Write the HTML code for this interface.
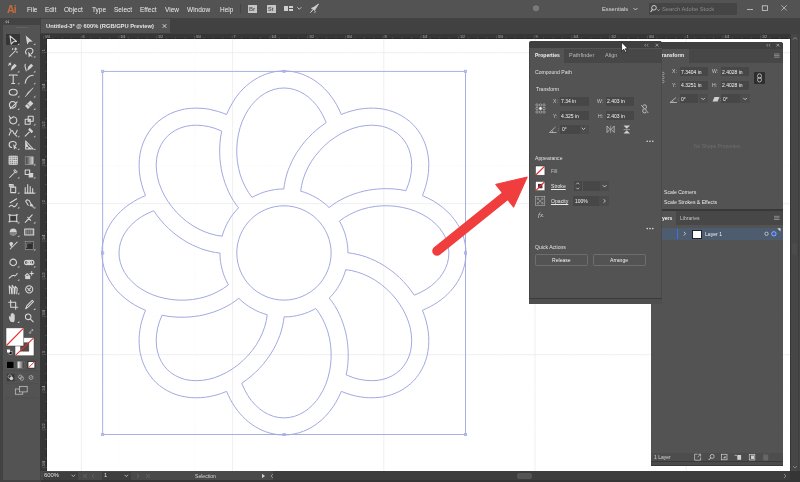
<!DOCTYPE html>
<html><head><meta charset="utf-8">
<style>
*{margin:0;padding:0;box-sizing:border-box}
html,body{width:800px;height:482px;overflow:hidden;background:#424242;font-family:"Liberation Sans",sans-serif;color:#d0d0d0}
.a{position:absolute}
.t,.ft{will-change:transform}
.t{position:absolute;white-space:nowrap;line-height:1}
.m{font-size:6.5px;top:6.8px;color:#ececec}
.p{font-size:5.1px;color:#e2e2e2}
.f{position:absolute;background:#474747}
.ft{position:absolute;white-space:nowrap;line-height:1;font-size:5px;color:#f4f4f4}
svg.i{position:absolute;overflow:visible}
.s{fill:none;stroke:#cfcfcf;stroke-width:0.9}
</style></head><body>
<!-- ============ MENU BAR ============ -->
<div class="a" style="left:0;top:0;width:800px;height:17.5px;background:#535353"></div>
<div class="t" style="left:6.8px;top:3.6px;font-size:10.5px;color:#c26c3c;font-weight:bold;letter-spacing:-0.9px">Ai</div>
<div class="t m" style="left:27px">File</div>
<div class="t m" style="left:45px">Edit</div>
<div class="t m" style="left:64px">Object</div>
<div class="t m" style="left:92px">Type</div>
<div class="t m" style="left:114px">Select</div>
<div class="t m" style="left:140px">Effect</div>
<div class="t m" style="left:164.5px">View</div>
<div class="t m" style="left:187px">Window</div>
<div class="t m" style="left:220px">Help</div>
<div class="a" style="left:239.5px;top:4px;width:1px;height:9px;background:#444"></div>
<div class="a" style="left:248px;top:5px;width:9px;height:8px;background:#c6c6c6"></div>
<div class="t" style="left:249.3px;top:6.6px;font-size:5.5px;font-weight:bold;color:#555">Br</div>
<div class="a" style="left:266.5px;top:5px;width:9.5px;height:8px;background:#c6c6c6"></div>
<div class="t" style="left:268.2px;top:6.6px;font-size:5.5px;font-weight:bold;color:#555">St</div>
<div class="a" style="left:284px;top:5.5px;width:4px;height:5.5px;background:#cfcfcf"></div>
<div class="a" style="left:289px;top:5.5px;width:4px;height:2.5px;background:#cfcfcf"></div>
<div class="a" style="left:289px;top:8.5px;width:4px;height:2.5px;background:#cfcfcf"></div>
<div class="a" style="left:649px;top:3px;width:88px;height:12px;background:#454545;border-radius:1px"></div>
<svg class="i" style="left:0;top:0" width="800" height="18">
<path class="s" d="M297.3 7.3L299.3 9.3L301.3 7.3"/>
<path d="M310.5 12.5L313 9.5L312 8.5L318.5 4L314.5 10.5L313.5 9.5Z M311 8.5L313.5 7.5 M315.5 11L314.5 13" fill="#cfcfcf" stroke="#cfcfcf" stroke-width="0.8"/>
<path d="M533 6.5L536 5L539 6.5V10L536 11.5L533 10Z" fill="#7a7a7a"/>
<path class="s" d="M633.5 8L635.5 10L637.5 8"/>
<circle cx="654" cy="7.8" r="2.3" class="s" style="stroke-width:1"/>
<path class="s" d="M652.3 9.6L650.6 11.8" style="stroke-width:1.1"/>
<path class="s" d="M657.3 9.5L658.5 10.7L659.7 9.5" style="stroke-width:0.7"/>
<path class="s" d="M747 9.5H753" style="stroke-width:0.8"/>
<rect x="762.3" y="5.8" width="5.2" height="4.6" class="s" style="stroke-width:0.8"/>
<path class="s" d="M781.5 5.3L786.7 10.5M786.7 5.3L781.5 10.5" style="stroke-width:0.75"/>
</svg>
<div class="t" style="left:601.8px;top:6.8px;font-size:5.75px;color:#dadada">Essentials</div>
<div class="t" style="left:662px;top:6.8px;font-size:5.75px;color:#8a8a8a">Search Adobe Stock</div>

<!-- ============ TOOLBAR ============ -->
<div class="a" style="left:2.5px;top:18.5px;width:37.5px;height:461px;background:#535353"></div>
<div class="a" style="left:2.5px;top:18.5px;width:37.5px;height:6.5px;background:#434343"></div>
<svg class="i" style="left:0;top:0" width="45" height="30"><path d="M6.9 20.6L5.6 21.8L6.9 23M9 20.6L7.7 21.8L9 23" fill="none" stroke="#d0d0d0" stroke-width="0.7"/></svg>
<div class="a" style="left:16px;top:27px;width:12px;height:0.8px;background:#626262"></div>
<div class="a" style="left:6.2px;top:34.2px;width:14px;height:10.8px;background:#363636"></div>
<svg class="i" style="left:0;top:0" width="45" height="482"><g transform="translate(13.20 40.00)"><path d="M-3.2 -4.2L3.3 1.5L0 1.8L-2 4.2Z" fill="none" stroke="#d8d8d8" stroke-width="1.05" stroke-linejoin="round" stroke-linecap="round"/></g><path d="M19.3 43.3L19.3 45.1L17.5 45.1Z" fill="#cfcfcf"/><g transform="translate(29.20 40.00)"><path d="M-3.5 -4.5L3.5 1.5L0 1.8L-2 4.5Z" fill="#d2d2d2"/></g><path d="M35.3 43.3L35.3 45.1L33.5 45.1Z" fill="#cfcfcf"/><g transform="translate(13.20 52.50)"><path d="M-3.5 4L2 -1.5" fill="none" stroke="#d8d8d8" stroke-width="1.05" stroke-linejoin="round" stroke-linecap="round" stroke-width="1.1"/><path d="M2.5 -4.5V-2.5M1.5 -3.5H3.5M-0.5 -4V-3M3.8 -1V0" fill="none" stroke="#d8d8d8" stroke-width="1.05" stroke-linejoin="round" stroke-linecap="round" stroke-width="0.6"/></g><g transform="translate(29.20 52.50)"><path d="M-3 1.5C-5 -2 -2 -4.5 1 -4.2C4.5 -3.8 4.5 0 2 1.2" fill="none" stroke="#d8d8d8" stroke-width="1.05" stroke-linejoin="round" stroke-linecap="round"/><path d="M-1 -1L3.5 4.5L1 3.5L-0.5 5Z" fill="#d2d2d2"/></g><path d="M35.3 55.8L35.3 57.6L33.5 57.6Z" fill="#cfcfcf"/><g transform="translate(13.20 67.30)"><path d="M-2.5 3.5L-1.5 -0.5L1.5 -3.5L3.5 -1.5L0.5 1.5Z" fill="#d2d2d2"/><path d="M-4 -4L-2.5 -2.5M-4.5 -2.2L-2.5 -4.3" fill="none" stroke="#d8d8d8" stroke-width="1.05" stroke-linejoin="round" stroke-linecap="round" stroke-width="0.6"/></g><path d="M19.3 70.6L19.3 72.4L17.5 72.4Z" fill="#cfcfcf"/><g transform="translate(29.20 67.30)"><path d="M-2 3.5L-1 -0.5L2 -3.5L4 -1.5L1 1.5Z" fill="#d2d2d2"/><path d="M-4 -3C-5 0 -3 1 -3 3.5" fill="none" stroke="#d8d8d8" stroke-width="1.05" stroke-linejoin="round" stroke-linecap="round" stroke-width="0.6"/></g><path d="M35.3 70.6L35.3 72.4L33.5 72.4Z" fill="#cfcfcf"/><g transform="translate(13.20 79.20)"><path d="M-3.8 -3.8V-4.3H3.8V-3.8M0 -4.3V4.2M-1.5 4.2H1.5" fill="none" stroke="#d8d8d8" stroke-width="1.05" stroke-linejoin="round" stroke-linecap="round" stroke-width="0.95"/></g><path d="M19.3 82.5L19.3 84.3L17.5 84.3Z" fill="#cfcfcf"/><g transform="translate(29.20 79.20)"><path d="M-4 4C-3.5 -1 0 -4 4 -4" fill="none" stroke="#d8d8d8" stroke-width="1.05" stroke-linejoin="round" stroke-linecap="round"/></g><path d="M35.3 82.5L35.3 84.3L33.5 84.3Z" fill="#cfcfcf"/><g transform="translate(13.20 92.30)"><ellipse cx="0" cy="0" rx="4" ry="3" fill="none" stroke="#d8d8d8" stroke-width="1.05" stroke-linejoin="round" stroke-linecap="round"/></g><path d="M19.3 95.6L19.3 97.4L17.5 97.4Z" fill="#cfcfcf"/><g transform="translate(29.20 92.30)"><path d="M4 -4.5L-1 1.5L-2.5 3L-4 4.5L-2.5 2.5L-1.5 0.5Z" fill="#d2d2d2" stroke="#d2d2d2" stroke-width="0.6"/></g><path d="M35.3 95.6L35.3 97.4L33.5 97.4Z" fill="#cfcfcf"/><g transform="translate(13.20 104.80)"><circle cx="-0.5" cy="0" r="3.3" fill="none" stroke="#d8d8d8" stroke-width="1.05" stroke-linejoin="round" stroke-linecap="round"/><path d="M-3 4L4 -3" fill="none" stroke="#d8d8d8" stroke-width="1.05" stroke-linejoin="round" stroke-linecap="round" stroke-width="1.1"/></g><path d="M19.3 108.1L19.3 109.9L17.5 109.9Z" fill="#cfcfcf"/><g transform="translate(29.20 104.80)"><path d="M-4.2 1.2L1.2 -4.2L4.2 -1.2L-1.2 4.2Z" fill="#d2d2d2"/><path d="M-2 -1L1 2" stroke="#535353" stroke-width="0.8"/></g><path d="M35.3 108.1L35.3 109.9L33.5 109.9Z" fill="#cfcfcf"/><g transform="translate(13.20 120.30)"><path d="M-2.8 -2.2A3.6 3.6 0 1 0 0 -3.6" fill="none" stroke="#d8d8d8" stroke-width="1.05" stroke-linejoin="round" stroke-linecap="round"/><path d="M-4 -4.3L-2.6 -1.8L-0.3 -3" fill="none" stroke="#d8d8d8" stroke-width="1.05" stroke-linejoin="round" stroke-linecap="round" stroke-width="0.9"/></g><path d="M19.3 123.6L19.3 125.4L17.5 125.4Z" fill="#cfcfcf"/><g transform="translate(29.20 120.30)"><rect x="-4" y="-1" width="5" height="5" fill="none" stroke="#d8d8d8" stroke-width="1.05" stroke-linejoin="round" stroke-linecap="round"/><rect x="-1" y="-4" width="5" height="5" fill="none" stroke="#d8d8d8" stroke-width="1.05" stroke-linejoin="round" stroke-linecap="round"/><path d="M-1 1L1 -1" fill="none" stroke="#d8d8d8" stroke-width="1.05" stroke-linejoin="round" stroke-linecap="round" stroke-width="0.6"/></g><path d="M35.3 123.6L35.3 125.4L33.5 125.4Z" fill="#cfcfcf"/><g transform="translate(13.20 132.20)"><path d="M-4 3C-3 -1 -1 -3 0 0C1 3 3 2 4 -2" fill="none" stroke="#d8d8d8" stroke-width="1.05" stroke-linejoin="round" stroke-linecap="round" stroke-width="1.1"/><path d="M-3.5 -3.5L-2 -1.5M2 2.5L3.5 4" fill="none" stroke="#d8d8d8" stroke-width="1.05" stroke-linejoin="round" stroke-linecap="round" stroke-width="0.6"/></g><path d="M19.3 135.5L19.3 137.3L17.5 137.3Z" fill="#cfcfcf"/><g transform="translate(29.20 132.20)"><path d="M-4 4L0 0" fill="none" stroke="#d8d8d8" stroke-width="1.05" stroke-linejoin="round" stroke-linecap="round"/><path d="M-1 -2.5L2.5 1L4 -1L0.5 -4.5Z" fill="#d2d2d2"/></g><path d="M35.3 135.5L35.3 137.3L33.5 137.3Z" fill="#cfcfcf"/><g transform="translate(13.20 145.00)"><path d="M-1.5 2.5C-5 2 -5 -3 -1 -3.5C3 -4 4 -1 2 1" fill="none" stroke="#d8d8d8" stroke-width="1.05" stroke-linejoin="round" stroke-linecap="round"/><path d="M0 -1L4 3.5L1.8 3.2L0.8 5Z" fill="#d2d2d2"/></g><path d="M19.3 148.3L19.3 150.1L17.5 150.1Z" fill="#cfcfcf"/><g transform="translate(29.20 145.00)"><path d="M-3.5 -4V4H4L-3.5 -4ZM-3.5 0L2 4M-3.5 -2.5L0 4" fill="none" stroke="#d8d8d8" stroke-width="1.05" stroke-linejoin="round" stroke-linecap="round" stroke-width="0.7"/></g><path d="M35.3 148.3L35.3 150.1L33.5 150.1Z" fill="#cfcfcf"/><g transform="translate(13.20 160.30)"><rect x="-4" y="-4" width="8" height="8" fill="none" stroke="#d8d8d8" stroke-width="1.05" stroke-linejoin="round" stroke-linecap="round"/><path d="M-4 0C-1 -1 1 1 4 0M0 -4C-1 -1 1 1 0 4M-2 -4V4M2 -4V4M-4 -2H4M-4 2H4" fill="none" stroke="#d8d8d8" stroke-width="1.05" stroke-linejoin="round" stroke-linecap="round" stroke-width="0.5"/></g><g transform="translate(29.20 160.30)"><defs><linearGradient id="gr1"><stop offset="0" stop-color="#3a3a3a"/><stop offset="1" stop-color="#d0d0d0"/></linearGradient></defs><rect x="-4" y="-3.5" width="8" height="7.5" fill="url(#gr1)" stroke="#bbb" stroke-width="0.5"/></g><path d="M35.3 163.6L35.3 165.4L33.5 165.4Z" fill="#cfcfcf"/><g transform="translate(13.20 173.50)"><path d="M-3.5 4L2 -1.5M0.5 -3L3 -0.5M1.5 -4L4 -1.5" fill="none" stroke="#d8d8d8" stroke-width="1.05" stroke-linejoin="round" stroke-linecap="round" stroke-width="1.1"/></g><path d="M19.3 176.8L19.3 178.6L17.5 178.6Z" fill="#cfcfcf"/><g transform="translate(29.20 173.50)"><rect x="-4" y="-3.5" width="4.5" height="4.5" fill="none" stroke="#d8d8d8" stroke-width="1.05" stroke-linejoin="round" stroke-linecap="round"/><rect x="-0.5" y="-0.5" width="4.5" height="4.5" fill="#d2d2d2"/></g><path d="M35.3 176.8L35.3 178.6L33.5 178.6Z" fill="#cfcfcf"/><g transform="translate(13.20 188.60)"><rect x="-2.5" y="-1.5" width="5" height="5.5" fill="none" stroke="#d8d8d8" stroke-width="1.05" stroke-linejoin="round" stroke-linecap="round"/><path d="M-4 -4H-1M-4 -2.5H-1M0 -4V-1.5" fill="none" stroke="#d8d8d8" stroke-width="1.05" stroke-linejoin="round" stroke-linecap="round" stroke-width="0.6"/></g><path d="M19.3 191.9L19.3 193.7L17.5 193.7Z" fill="#cfcfcf"/><g transform="translate(29.20 188.60)"><path d="M-4 4.5V-1M-1.5 4.5V-4M1 4.5V-2M3.5 4.5V0M-4.5 4.5H4.5" fill="none" stroke="#d8d8d8" stroke-width="1.05" stroke-linejoin="round" stroke-linecap="round" stroke-width="1"/></g><path d="M35.3 191.9L35.3 193.7L33.5 193.7Z" fill="#cfcfcf"/><g transform="translate(13.20 203.30)"><path d="M-4 3.5C-2 1 -1 2 0 3C1 4 3 3 4 0M-3 -0.5L3.5 -4.5" fill="none" stroke="#d8d8d8" stroke-width="1.05" stroke-linejoin="round" stroke-linecap="round" stroke-width="1"/></g><path d="M19.3 206.6L19.3 208.4L17.5 208.4Z" fill="#cfcfcf"/><g transform="translate(29.20 203.30)"><path d="M-3.5 -2C-3 -4 0 -4 1 -1C2 2 4 2 4 4M-3.5 -2L-1 2" fill="none" stroke="#d8d8d8" stroke-width="1.05" stroke-linejoin="round" stroke-linecap="round" stroke-width="0.9"/><circle cx="2" cy="2" r="1.3" fill="#d2d2d2"/></g><path d="M35.3 206.6L35.3 208.4L33.5 208.4Z" fill="#cfcfcf"/><g transform="translate(13.20 218.30)"><rect x="-3.5" y="-3" width="7" height="6" fill="none" stroke="#d8d8d8" stroke-width="1.05" stroke-linejoin="round" stroke-linecap="round" stroke-width="0.7"/><path d="M-4.5 -3.5H-3M3 -3.5H4.5M-4.5 3.5H-3M3 3.5H4.5" fill="none" stroke="#d8d8d8" stroke-width="1.05" stroke-linejoin="round" stroke-linecap="round" stroke-width="0.6"/><rect x="-2.5" y="-2" width="5" height="4" fill="#3a3a3a"/></g><path d="M19.3 221.6L19.3 223.4L17.5 223.4Z" fill="#cfcfcf"/><g transform="translate(29.20 218.30)"><path d="M-4 4L3 -3.5M-1.5 -1L1.5 2" fill="none" stroke="#d8d8d8" stroke-width="1.05" stroke-linejoin="round" stroke-linecap="round" stroke-width="0.9"/></g><path d="M35.3 221.6L35.3 223.4L33.5 223.4Z" fill="#cfcfcf"/><g transform="translate(13.20 232.00)"><circle cx="0" cy="0" r="3.5" fill="#d2d2d2"/><path d="M-3.5 0A3.5 3.5 0 0 0 3.5 0Z" fill="#888"/></g><path d="M19.3 235.3L19.3 237.1L17.5 237.1Z" fill="#cfcfcf"/><g transform="translate(29.20 232.00)"><rect x="-4.5" y="-3" width="9" height="6" fill="none" stroke="#d8d8d8" stroke-width="1.05" stroke-linejoin="round" stroke-linecap="round" stroke-width="0.7"/><path d="M-3 -3V3M-1 -3V3M1 -3V3M3 -3V3" stroke="#d2d2d2" stroke-width="0.5"/></g><g transform="translate(13.20 245.50)"><path d="M-4 -2C-3 -4 -1 -4 0 -2L-2 2Z" fill="#d2d2d2"/><path d="M-3 3.5L4 -3.5" fill="none" stroke="#d8d8d8" stroke-width="1.05" stroke-linejoin="round" stroke-linecap="round" stroke-width="1.1"/></g><g transform="translate(29.20 245.50)"><rect x="-4" y="-4" width="8" height="8" fill="#2e2e2e" stroke="#aaa" stroke-width="0.6"/><path d="M-2.5 2.5V-2.5H2.5" stroke="#aaa" stroke-width="0.6" fill="none"/></g><path d="M35.3 248.8L35.3 250.6L33.5 250.6Z" fill="#cfcfcf"/><g transform="translate(13.20 262.40)"><circle cx="0" cy="0" r="3.3" fill="none" stroke="#d8d8d8" stroke-width="1.05" stroke-linejoin="round" stroke-linecap="round" stroke-width="0.8"/></g><path d="M19.3 265.7L19.3 267.5L17.5 267.5Z" fill="#cfcfcf"/><g transform="translate(29.20 262.40)"><circle cx="-2.5" cy="0" r="2.2" fill="none" stroke="#d8d8d8" stroke-width="1.05" stroke-linejoin="round" stroke-linecap="round" stroke-width="0.7"/><circle cx="2.5" cy="0" r="2.2" fill="none" stroke="#d8d8d8" stroke-width="1.05" stroke-linejoin="round" stroke-linecap="round" stroke-width="0.7"/><circle cx="0" cy="0" r="2.2" fill="none" stroke="#d8d8d8" stroke-width="1.05" stroke-linejoin="round" stroke-linecap="round" stroke-width="0.7"/></g><path d="M35.3 265.7L35.3 267.5L33.5 267.5Z" fill="#cfcfcf"/><g transform="translate(13.20 275.60)"><path d="M-4 2.5C-2 1 -1 -1 1 0C2 1 3 -1 4 -2" fill="none" stroke="#d8d8d8" stroke-width="1.05" stroke-linejoin="round" stroke-linecap="round" stroke-width="0.9"/></g><path d="M19.3 278.9L19.3 280.7L17.5 280.7Z" fill="#cfcfcf"/><g transform="translate(29.20 275.60)"><rect x="-4" y="0" width="5" height="3.5" fill="#d2d2d2"/><path d="M2.5 -4V-0.5M0.8 -2.2H4.2" fill="none" stroke="#d8d8d8" stroke-width="1.05" stroke-linejoin="round" stroke-linecap="round" stroke-width="0.8"/><path d="M-4 0L-2 -2L0 0" fill="none" stroke="#d8d8d8" stroke-width="1.05" stroke-linejoin="round" stroke-linecap="round" stroke-width="0.5"/></g><g transform="translate(13.20 289.30)"><path d="M-3.5 4.5L-4 -3.5L-2 -1L-1.5 4.5M-1 4.5L-1 -4L1 -1L1 4.5M1.5 4.5L2 -3L4 -1L3.5 4.5" fill="none" stroke="#d8d8d8" stroke-width="1.05" stroke-linejoin="round" stroke-linecap="round" stroke-width="0.7"/></g><path d="M19.3 292.6L19.3 294.4L17.5 294.4Z" fill="#cfcfcf"/><g transform="translate(29.20 289.30)"><circle cx="0" cy="0" r="3.6" fill="none" stroke="#d8d8d8" stroke-width="1.05" stroke-linejoin="round" stroke-linecap="round"/><path d="M-1.5 -1L1 1.5M-1 1L1.5 -1.5" fill="none" stroke="#d8d8d8" stroke-width="1.05" stroke-linejoin="round" stroke-linecap="round" stroke-width="1"/></g><g transform="translate(13.20 304.80)"><path d="M-2.5 -4.5V2.5H4.5M-4.5 -2.5H2.5V4.5" fill="none" stroke="#d8d8d8" stroke-width="1.05" stroke-linejoin="round" stroke-linecap="round" stroke-width="0.85"/></g><g transform="translate(29.20 304.80)"><path d="M-3.5 4L-2.5 1L3 -4.5L4.3 -3.2L-1.2 2.3Z" fill="none" stroke="#d8d8d8" stroke-width="1.05" stroke-linejoin="round" stroke-linecap="round" stroke-width="0.75"/></g><path d="M35.3 308.1L35.3 309.9L33.5 309.9Z" fill="#cfcfcf"/><g transform="translate(13.20 317.80)"><path d="M-2.5 4C-4 2 -4.5 0 -4 -1.5C-3.5 -2 -3 -1.5 -2.5 -0.5V-3.5C-2.5 -4.5 -1.5 -4.5 -1.5 -3.5V-1V-4.5C-1.5 -5 -0.5 -5 -0.5 -4.5V-1V-4C-0.5 -4.7 0.5 -4.7 0.5 -4V-0.5V-3C0.5 -3.7 1.5 -3.7 1.5 -3V1C1.5 3 1 4 0.5 4.5Z" fill="#d2d2d2"/></g><path d="M19.3 321.1L19.3 322.9L17.5 322.9Z" fill="#cfcfcf"/><g transform="translate(29.20 317.80)"><circle cx="-1" cy="-1" r="2.8" fill="none" stroke="#d8d8d8" stroke-width="1.05" stroke-linejoin="round" stroke-linecap="round"/><path d="M1 1L4 4" fill="none" stroke="#d8d8d8" stroke-width="1.05" stroke-linejoin="round" stroke-linecap="round" stroke-width="1.2"/></g><rect x="15" y="337.6" width="19" height="18.2" fill="#fff" stroke="#3a3a3a" stroke-width="0.5"/><rect x="20.4" y="342.7" width="8.5" height="8.5" fill="#5a4646" stroke="#444" stroke-width="0.4"/><path d="M15.5 355.3L33.5 338.1" stroke="#e0302e" stroke-width="1.1"/><rect x="6" y="327.9" width="17.8" height="18.1" fill="#fff" stroke="#3a3a3a" stroke-width="0.5"/><path d="M6.5 345.5L23.3 328.4" stroke="#e0302e" stroke-width="1.1"/><path d="M30 333.5C30 331 31 330 33 330M31.8 329L33.2 330L32 331.3M29 332.2L30 333.6L31.2 332.3" fill="none" stroke="#cfcfcf" stroke-width="0.6"/><rect x="9" y="351.5" width="3" height="3" fill="#111" stroke="#ddd" stroke-width="0.5"/><rect x="7" y="349.5" width="3" height="3" fill="#fff"/><rect x="6.8" y="361.4" width="7.1" height="6.8" fill="#000" stroke="#777" stroke-width="0.4"/><defs><linearGradient id="gr2"><stop offset="0" stop-color="#fff"/><stop offset="1" stop-color="#333"/></linearGradient></defs><rect x="17.5" y="361.4" width="6.8" height="6.8" fill="url(#gr2)" stroke="#777" stroke-width="0.4"/><rect x="28" y="361.4" width="6.9" height="6.8" fill="#fff" stroke="#222" stroke-width="0.8"/><path d="M28.5 367.7L34.4 361.9" stroke="#e0302e" stroke-width="1"/><rect x="6.8" y="373.8" width="7.7" height="7.4" fill="#3a3a3a"/><circle cx="9.8" cy="376.6" r="1.8" fill="none" stroke="#ccc" stroke-width="0.6"/><circle cx="11.4" cy="378.4" r="1.8" fill="#ccc"/><circle cx="20.3" cy="376.8" r="1.8" fill="none" stroke="#ccc" stroke-width="0.6"/><circle cx="21.9" cy="378.5" r="1.8" fill="none" stroke="#ccc" stroke-width="0.6"/><circle cx="31" cy="377.5" r="2" fill="none" stroke="#ccc" stroke-width="0.6"/><path d="M30 378.5L32 376.5" stroke="#ccc" stroke-width="0.6"/><rect x="15.3" y="389" width="7.5" height="5.2" fill="none" stroke="#ccc" stroke-width="0.7"/><rect x="19.5" y="386.4" width="7.7" height="5.5" fill="#535353" stroke="#ccc" stroke-width="0.7"/><path d="M5 370.6H38M5 383.7H38M5 398H38M5 360.3H38" stroke="#4a4a4a" stroke-width="0.5"/></svg>

<!-- ============ TAB BAR ============ -->
<div class="a" style="left:40.5px;top:18.5px;width:759.5px;height:15px;background:#414141"></div>
<div class="a" style="left:41px;top:18.5px;width:129px;height:14.5px;background:#535353"></div>
<div class="t" style="left:45.5px;top:23.5px;font-size:5.75px;font-weight:bold;color:#e4e4e4">Untitled-3* @ 600% (RGB/GPU Preview)</div>
<svg class="i" style="left:0;top:0" width="800" height="40">
<path class="s" d="M162.7 24.2L166.3 27.8M166.3 24.2L162.7 27.8" style="stroke:#e0e0e0;stroke-width:0.9"/>
</svg>

<!-- ============ RULERS ============ -->
<div class="a" style="left:40.5px;top:33.5px;width:749.5px;height:5.3px;background:#363636;border-bottom:0.8px solid #2a2a2a"></div>
<div class="a" style="left:40px;top:33.5px;width:6.8px;height:437.5px;background:#363636;border-right:0.9px solid #2a2a2a"></div>
<svg class="i" style="left:0;top:0" width="800" height="482"><path d="M43.45 35.5V38.8M52.89 37.5V38.8M62.33 37.5V38.8M71.76 37.5V38.8M81.20 35.5V38.8M90.64 37.5V38.8M100.08 37.5V38.8M109.51 37.5V38.8M118.95 35.5V38.8M128.39 37.5V38.8M137.82 37.5V38.8M147.26 37.5V38.8M156.70 35.5V38.8M166.14 37.5V38.8M175.57 37.5V38.8M185.01 37.5V38.8M194.45 35.5V38.8M203.89 37.5V38.8M213.32 37.5V38.8M222.76 37.5V38.8M232.20 35.5V38.8M241.64 37.5V38.8M251.07 37.5V38.8M260.51 37.5V38.8M269.95 35.5V38.8M279.39 37.5V38.8M288.82 37.5V38.8M298.26 37.5V38.8M307.70 35.5V38.8M317.14 37.5V38.8M326.57 37.5V38.8M336.01 37.5V38.8M345.45 35.5V38.8M354.89 37.5V38.8M364.32 37.5V38.8M373.76 37.5V38.8M383.20 35.5V38.8M392.64 37.5V38.8M402.07 37.5V38.8M411.51 37.5V38.8M420.95 35.5V38.8M430.39 37.5V38.8M439.82 37.5V38.8M449.26 37.5V38.8M458.70 35.5V38.8M468.14 37.5V38.8M477.57 37.5V38.8M487.01 37.5V38.8M496.45 35.5V38.8M505.89 37.5V38.8M515.33 37.5V38.8M524.76 37.5V38.8M534.20 35.5V38.8M543.64 37.5V38.8M553.08 37.5V38.8M562.51 37.5V38.8M571.95 35.5V38.8M581.39 37.5V38.8M590.83 37.5V38.8M600.26 37.5V38.8M609.70 35.5V38.8M619.14 37.5V38.8M628.58 37.5V38.8M638.01 37.5V38.8M647.45 35.5V38.8M656.89 37.5V38.8M666.33 37.5V38.8M675.76 37.5V38.8M685.20 35.5V38.8M694.64 37.5V38.8M704.08 37.5V38.8M713.51 37.5V38.8M722.95 35.5V38.8M732.39 37.5V38.8M741.83 37.5V38.8M751.26 37.5V38.8M760.70 35.5V38.8M770.14 37.5V38.8M779.58 37.5V38.8M789.01 37.5V38.8M45.3 42.96H46.8M42 52.40H46.8M45.3 61.84H46.8M45.3 71.28H46.8M45.3 80.71H46.8M42 90.15H46.8M45.3 99.59H46.8M45.3 109.03H46.8M45.3 118.46H46.8M42 127.90H46.8M45.3 137.34H46.8M45.3 146.78H46.8M45.3 156.21H46.8M42 165.65H46.8M45.3 175.09H46.8M45.3 184.53H46.8M45.3 193.96H46.8M42 203.40H46.8M45.3 212.84H46.8M45.3 222.28H46.8M45.3 231.71H46.8M42 241.15H46.8M45.3 250.59H46.8M45.3 260.02H46.8M45.3 269.46H46.8M42 278.90H46.8M45.3 288.34H46.8M45.3 297.77H46.8M45.3 307.21H46.8M42 316.65H46.8M45.3 326.09H46.8M45.3 335.52H46.8M45.3 344.96H46.8M42 354.40H46.8M45.3 363.84H46.8M45.3 373.27H46.8M45.3 382.71H46.8M42 392.15H46.8M45.3 401.59H46.8M45.3 411.02H46.8M45.3 420.46H46.8M42 429.90H46.8M45.3 439.34H46.8M45.3 448.77H46.8M45.3 458.21H46.8M42 467.65H46.8" stroke="#6a6a6a" stroke-width="0.5" fill="none"/><g font-family="Liberation Sans" font-size="3.8" fill="#b0b0b0"><text x="44.65" y="37.6">3/4</text><text x="82.40" y="37.6">6</text><text x="120.15" y="37.6">1/4</text><text x="157.90" y="37.6">1/2</text><text x="195.65" y="37.6">3/4</text><text x="233.40" y="37.6">7</text><text x="271.15" y="37.6">1/4</text><text x="308.90" y="37.6">1/2</text><text x="346.65" y="37.6">3/4</text><text x="384.40" y="37.6">8</text><text x="422.15" y="37.6">1/4</text><text x="459.90" y="37.6">1/2</text><text x="497.65" y="37.6">3/4</text><text x="535.40" y="37.6">9</text><text x="573.15" y="37.6">1/4</text><text x="610.90" y="37.6">1/2</text><text x="648.65" y="37.6">3/4</text><text x="686.40" y="37.6">1</text><text x="724.15" y="37.6">1/4</text><text x="761.90" y="37.6">1/2</text><text transform="translate(44.6 51.20) rotate(-90)" x="0" y="0" text-anchor="start">1</text><text transform="translate(44.6 88.95) rotate(-90)" x="0" y="0" text-anchor="start">1/4</text><text transform="translate(44.6 126.70) rotate(-90)" x="0" y="0" text-anchor="start">1/2</text><text transform="translate(44.6 164.45) rotate(-90)" x="0" y="0" text-anchor="start">3/4</text><text transform="translate(44.6 202.20) rotate(-90)" x="0" y="0" text-anchor="start">2</text><text transform="translate(44.6 239.95) rotate(-90)" x="0" y="0" text-anchor="start">1/4</text><text transform="translate(44.6 277.70) rotate(-90)" x="0" y="0" text-anchor="start">1/2</text><text transform="translate(44.6 315.45) rotate(-90)" x="0" y="0" text-anchor="start">3/4</text><text transform="translate(44.6 353.20) rotate(-90)" x="0" y="0" text-anchor="start">3</text><text transform="translate(44.6 390.95) rotate(-90)" x="0" y="0" text-anchor="start">1/4</text><text transform="translate(44.6 428.70) rotate(-90)" x="0" y="0" text-anchor="start">1/2</text><text transform="translate(44.6 466.45) rotate(-90)" x="0" y="0" text-anchor="start">3/4</text></g></svg>

<!-- ============ CANVAS ============ -->
<div class="a" style="left:46.8px;top:38.8px;width:743.2px;height:432.2px;background:#ffffff;overflow:hidden">
<svg width="744" height="433" viewBox="46.8 38.8 744 433" style="position:absolute;left:0;top:0">
<g fill="none" stroke="#ebebeb" stroke-width="0.8">
<path d="M81.2 38V472M232.4 38V472M383.6 38V472M534.8 38V472M686 38V472M46 52.5H790M46 203.5H790M46 354.5H790"/>
</g>
<g fill="none" stroke="#fafafa" stroke-width="0.5">
<path d="M119 38V472M157 38V472M194.5 38V472M270 38V472M308 38V472M346 38V472M421 38V472M459 38V472M497 38V472M572 38V472M610 38V472M648 38V472M723 38V472M761 38V472M46 90H790M46 128H790M46 165.5H790M46 241H790M46 279H790M46 316H790M46 391H790M46 429H790"/>
</g>
<rect x="102.45" y="71.2" width="362.85" height="363.1" fill="none" stroke="#a5ace2" stroke-width="0.95"/>
<g fill="#b8c0e8" stroke="#a3ade6" stroke-width="0.6">
<rect x="101.25" y="70" width="2.4" height="2.4"/><rect x="282.7" y="70" width="2.4" height="2.4"/><rect x="464.1" y="70" width="2.4" height="2.4"/>
<rect x="101.25" y="251.55" width="2.4" height="2.4"/><rect x="464.1" y="251.55" width="2.4" height="2.4"/>
<rect x="101.25" y="433.1" width="2.4" height="2.4"/><rect x="282.7" y="433.1" width="2.4" height="2.4"/><rect x="464.1" y="433.1" width="2.4" height="2.4"/>
</g>
<path d="M340.9 113.8L338.6 108.8L336.2 104.2L333.4 99.7L330.7 95.9L327.5 91.9L324.4 88.6L320.8 85.1L317.2 82.3L313.1 79.4L309.4 77.3L305.3 75.3L301.3 73.7L296.6 72.3L292.4 71.4L287.9 70.9L283.6 70.7L279.3 70.9L275.1 71.4L270.9 72.3L266.2 73.7L262.2 75.3L258.1 77.3L253.8 79.8L250.1 82.4L246.2 85.6L242.9 88.7L239.5 92.4L236.6 96.0L233.7 100.3L231.0 104.8L228.5 109.6L226.4 114.3L222.5 112.8L218.4 111.4L210.6 109.4L206.9 108.7L202.8 108.2L195.5 107.9L191.4 108.1L188.0 108.4L184.3 108.9L180.9 109.7L177.0 110.8L173.8 111.9L170.6 113.2L167.5 114.8L162.9 117.6L158.3 121.0L154.5 124.5L150.9 128.6L148.0 132.8L145.1 137.8L142.9 142.8L141.1 148.2L139.9 153.5L139.1 159.5L138.9 165.4L139.2 171.5L140.0 177.7L141.4 183.8L143.2 189.8L145.3 195.4L141.5 197.1L137.4 199.1L133.5 201.3L129.9 203.6L126.3 206.2L123.4 208.5L120.2 211.5L117.3 214.4L114.5 217.7L112.2 220.7L110.0 224.1L108.2 227.3L106.4 230.9L105.0 234.4L103.8 238.2L102.9 241.8L102.0 246.9L101.7 252.0L101.9 257.2L102.6 262.3L103.8 267.3L105.4 272.2L107.5 276.9L110.3 281.9L113.3 286.2L116.7 290.4L120.8 294.6L125.0 298.2L129.8 301.8L134.5 304.8L139.8 307.6L145.3 310.1L143.5 314.9L141.9 319.8L140.7 324.3L139.8 329.4L139.2 334.0L138.9 338.3L139.0 343.4L139.3 347.7L139.9 352.2L140.9 356.4L142.1 360.6L143.7 364.6L145.5 368.5L147.6 372.2L150.1 375.7L152.8 379.1L155.7 382.2L159.4 385.4L163.1 388.1L167.3 390.6L171.4 392.6L175.9 394.4L180.3 395.7L185.4 396.7L190.3 397.4L195.5 397.6L200.1 397.5L205.4 397.0L210.6 396.1L215.8 394.9L221.0 393.3L226.4 391.2L228.1 395.0L230.1 399.1L232.3 403.0L234.6 406.6L237.2 410.2L239.5 413.1L242.5 416.3L245.4 419.2L248.7 422.0L251.7 424.3L255.1 426.5L258.3 428.3L261.9 430.1L265.4 431.5L269.2 432.7L272.8 433.6L277.9 434.5L283.0 434.8L288.2 434.6L293.3 433.9L298.3 432.7L303.2 431.1L307.9 429.0L312.9 426.2L317.2 423.2L321.4 419.8L325.6 415.7L329.2 411.5L332.8 406.7L335.8 402.0L338.6 396.7L341.1 391.2L345.9 393.0L350.8 394.6L355.3 395.8L360.4 396.7L365.0 397.3L369.3 397.6L374.4 397.5L378.7 397.2L383.2 396.6L387.4 395.6L391.6 394.4L395.6 392.8L399.5 391.0L403.2 388.9L406.7 386.4L410.1 383.7L413.2 380.8L416.4 377.1L419.1 373.4L421.6 369.2L423.6 365.1L425.4 360.6L426.7 356.2L427.7 351.1L428.4 346.2L428.6 341.0L428.5 336.4L428.0 331.1L427.1 325.9L425.9 320.7L424.3 315.5L422.2 310.1L426.0 308.4L430.1 306.4L434.0 304.2L437.6 301.9L441.2 299.3L444.1 297.0L447.3 294.0L450.2 291.1L453.0 287.8L455.3 284.8L457.5 281.4L459.3 278.2L461.1 274.6L462.5 271.1L463.7 267.3L464.6 263.7L465.5 258.6L465.8 253.5L465.6 248.3L464.9 243.2L463.7 238.2L462.1 233.3L460.0 228.6L457.2 223.6L454.2 219.3L450.8 215.1L446.7 210.9L442.5 207.3L437.7 203.7L433.0 200.7L427.7 197.9L422.2 195.4L424.0 190.8L425.4 186.4L426.7 181.4L427.6 177.0L428.2 172.4L428.5 168.0L428.6 163.0L428.3 158.7L427.7 154.4L426.9 150.2L425.7 146.0L424.3 142.0L422.5 138.0L420.5 134.3L418.1 130.7L415.8 127.7L412.6 124.1L409.2 121.0L405.3 118.1L401.5 115.6L397.2 113.4L392.9 111.6L388.3 110.1L383.2 108.9L378.7 108.3L373.5 107.9L368.5 108.0L363.2 108.4L357.8 109.2L351.9 110.6L346.5 112.2L341.1 114.3L340.9 113.8Z M330.9 252.8L330.7 248.1L330.0 243.6L328.9 239.1L327.3 234.7L325.3 230.5L323.0 226.6L320.2 222.8L317.1 219.4L313.7 216.3L309.9 213.5L306.0 211.2L301.8 209.2L297.4 207.6L292.9 206.5L288.4 205.8L283.8 205.6L279.1 205.8L274.6 206.5L270.1 207.6L265.7 209.2L261.5 211.2L257.6 213.5L253.8 216.3L250.4 219.4L247.3 222.8L244.5 226.6L242.2 230.5L240.2 234.7L238.6 239.1L237.5 243.6L236.8 248.1L236.6 252.8L236.8 257.4L237.5 261.9L238.6 266.4L240.2 270.8L242.2 275.0L244.5 278.9L247.3 282.7L250.4 286.1L253.8 289.2L257.6 292.0L261.5 294.3L265.7 296.3L270.1 297.9L274.6 299.0L279.1 299.7L283.8 299.9L288.4 299.7L292.9 299.0L297.4 297.9L301.8 296.3L306.0 294.3L309.9 292.0L313.7 289.2L317.1 286.1L320.2 282.7L323.0 278.9L325.3 275.0L327.3 270.8L328.9 266.4L330.0 261.9L330.7 257.4L330.9 252.8Z M325.7 121.7L323.0 115.8L319.9 110.2L316.3 105.1L312.3 100.6L308.0 96.7L303.9 93.8L299.1 91.2L294.1 89.3L289.0 88.2L283.8 87.8L279.1 88.1L274.0 89.2L268.9 91.0L264.1 93.5L259.5 96.7L255.2 100.6L251.2 105.1L248.0 109.6L244.8 115.1L242.1 121.0L239.9 127.3L238.3 133.9L237.1 140.7L236.6 147.6L236.6 154.6L237.2 161.5L238.4 168.2L240.1 174.8L242.4 181.0L245.2 186.9L248.4 192.4L251.9 197.2L255.7 195.2L259.3 193.6L262.9 192.2L267.4 190.9L271.3 190.0L275.1 189.3L279.0 188.9L283.6 188.8L284.2 184.4L285.1 179.8L286.4 174.8L287.8 170.4L289.5 166.2L291.6 161.4L293.8 157.1L296.5 152.5L299.1 148.7L301.9 144.8L304.8 141.2L308.4 137.2L312.5 133.1L316.7 129.4L321.0 126.0L325.9 122.5L325.7 121.7Z M406.0 189.7L408.4 183.6L410.1 177.5L411.1 171.4L411.5 165.4L411.2 159.6L410.4 154.7L408.8 149.4L406.6 144.5L403.8 140.1L400.8 136.5L396.9 133.0L392.5 130.2L387.7 127.9L382.5 126.2L376.9 125.3L371.1 125.0L365.1 125.4L359.0 126.4L352.9 128.1L346.8 130.5L340.8 133.4L335.0 137.0L329.4 141.0L324.7 145.1L319.9 150.0L315.4 155.3L311.4 160.9L308.0 166.8L305.2 172.8L303.0 178.9L301.4 185.1L300.5 191.0L304.6 192.2L308.2 193.6L312.5 195.6L316.0 197.5L319.3 199.5L322.5 201.8L325.6 204.3L328.9 207.4L332.4 204.7L336.2 202.1L340.7 199.5L344.9 197.4L349.0 195.6L354.0 193.7L358.5 192.3L363.7 190.9L368.2 190.0L372.9 189.3L377.5 188.8L382.9 188.5L388.7 188.5L394.2 188.8L399.7 189.4L405.7 190.5L406.0 189.7Z M414.8 294.7L420.7 292.0L426.3 288.9L431.4 285.3L435.9 281.3L439.8 277.0L442.7 272.9L445.3 268.1L447.2 263.1L448.3 258.0L448.7 252.8L448.3 247.5L447.2 242.4L445.3 237.4L442.7 232.6L439.4 228.0L435.9 224.2L431.4 220.2L426.9 217.0L421.4 213.8L415.5 211.1L409.2 208.9L402.6 207.3L395.8 206.1L388.9 205.6L381.9 205.6L375.0 206.2L368.3 207.4L361.7 209.1L355.5 211.4L349.6 214.2L344.1 217.4L339.3 220.9L341.3 224.7L342.9 228.3L344.3 231.9L345.6 236.4L346.5 240.3L347.2 244.1L347.6 248.0L347.7 252.6L352.1 253.2L356.7 254.1L361.7 255.4L366.1 256.8L370.3 258.5L375.1 260.6L379.4 262.8L384.0 265.5L387.8 268.1L391.7 270.9L395.3 273.8L399.3 277.4L403.4 281.5L407.1 285.7L410.5 290.0L414.0 294.9L414.8 294.7Z M346.8 375.0L352.9 377.4L359.0 379.1L365.1 380.1L371.1 380.5L376.9 380.2L381.8 379.4L387.1 377.8L392.0 375.6L396.4 372.8L400.4 369.4L403.5 365.9L406.3 361.5L408.6 356.7L410.3 351.5L411.2 345.9L411.5 340.1L411.1 334.1L410.1 328.0L408.4 321.9L406.0 315.8L403.1 309.8L399.5 304.0L395.9 299.0L391.4 293.7L386.5 288.9L381.2 284.4L375.6 280.4L369.7 277.0L363.7 274.2L357.6 272.0L351.4 270.4L345.5 269.5L344.3 273.6L342.9 277.2L341.3 280.8L339.0 285.0L337.0 288.3L334.7 291.5L332.2 294.6L329.1 297.9L331.8 301.4L334.4 305.2L337.0 309.7L339.1 313.9L340.9 318.0L342.8 323.0L344.2 327.5L345.6 332.7L346.5 337.2L347.2 341.9L347.7 346.5L348.0 351.9L348.0 357.7L347.7 363.2L347.1 368.7L346.0 374.7L346.8 375.0Z M241.8 383.8L244.5 389.7L247.6 395.3L251.2 400.4L255.2 404.9L259.5 408.8L263.6 411.7L268.4 414.3L273.4 416.2L278.5 417.3L283.8 417.7L289.0 417.3L294.1 416.2L299.1 414.3L303.9 411.7L308.0 408.8L312.3 404.9L316.3 400.4L319.5 395.9L322.7 390.4L325.4 384.5L327.6 378.2L329.2 371.6L330.4 364.8L330.9 357.9L330.9 350.9L330.3 344.0L329.1 337.3L327.4 330.7L325.1 324.5L322.3 318.6L319.1 313.1L315.6 308.3L311.8 310.3L308.2 311.9L304.6 313.3L300.1 314.6L296.2 315.5L292.4 316.2L288.5 316.6L283.9 316.7L283.3 321.1L282.4 325.7L281.1 330.7L279.7 335.1L278.0 339.3L275.9 344.1L273.7 348.4L271.0 353.0L268.4 356.8L265.6 360.7L262.7 364.3L259.1 368.3L255.0 372.4L250.8 376.1L246.5 379.5L241.6 383.0L241.8 383.8Z M161.5 315.8L159.1 321.9L157.4 328.0L156.4 334.1L156.0 340.1L156.3 345.9L157.1 350.8L158.7 356.1L160.9 361.0L163.7 365.4L167.1 369.4L170.6 372.5L175.0 375.3L179.8 377.6L185.0 379.3L190.6 380.2L196.4 380.5L202.4 380.1L208.5 379.1L214.6 377.4L220.7 375.0L226.1 372.4L231.9 368.9L237.5 364.9L242.8 360.4L247.6 355.5L252.1 350.2L256.1 344.6L259.5 338.7L262.3 332.7L264.5 326.6L266.1 320.4L267.0 314.5L262.9 313.3L259.3 311.9L255.7 310.3L251.5 308.0L248.2 306.0L245.0 303.7L241.9 301.2L238.6 298.1L235.1 300.8L231.3 303.4L226.8 306.0L222.6 308.1L218.5 309.9L213.5 311.8L209.0 313.2L203.8 314.6L199.3 315.5L194.6 316.2L190.0 316.7L184.6 317.0L178.8 317.0L173.3 316.7L167.8 316.1L161.8 315.0L161.5 315.8Z M152.7 210.8L146.8 213.5L141.2 216.6L136.1 220.2L131.6 224.2L127.7 228.5L124.5 233.1L122.2 237.4L120.3 242.4L119.2 247.5L118.8 252.8L119.1 257.4L120.2 262.5L122.0 267.6L124.5 272.4L127.7 277.0L131.6 281.3L136.1 285.3L140.6 288.5L146.1 291.7L152.0 294.4L158.3 296.6L164.9 298.2L171.7 299.4L178.6 299.9L185.6 299.9L192.5 299.3L199.2 298.1L205.8 296.4L212.0 294.1L217.9 291.3L223.4 288.1L228.2 284.6L226.2 280.8L224.6 277.2L223.2 273.6L221.9 269.1L221.0 265.2L220.3 261.4L219.9 257.5L219.8 252.9L215.4 252.3L210.8 251.4L205.8 250.1L201.4 248.7L197.2 247.0L192.4 244.9L188.1 242.7L183.5 240.0L179.7 237.4L175.8 234.6L172.2 231.7L168.2 228.1L164.1 224.0L160.4 219.8L157.0 215.5L153.5 210.6L152.7 210.8Z M220.7 130.5L214.6 128.1L208.5 126.4L202.4 125.4L196.4 125.0L191.2 125.2L185.7 126.1L180.4 127.7L175.5 129.9L171.1 132.7L167.1 136.1L163.7 140.1L160.9 144.5L158.7 149.4L157.1 154.7L156.3 159.6L156.0 165.4L156.4 171.4L157.4 177.5L159.1 183.6L161.5 189.7L164.4 195.7L168.0 201.5L171.6 206.5L176.1 211.8L181.0 216.6L186.3 221.1L191.9 225.1L197.8 228.5L203.8 231.3L209.9 233.5L216.1 235.1L222.0 236.0L223.2 231.9L224.6 228.3L226.2 224.7L228.5 220.5L230.5 217.2L232.8 214.0L235.3 210.9L238.4 207.6L235.7 204.1L233.1 200.3L230.5 195.8L228.4 191.6L226.6 187.5L224.7 182.5L223.3 178.0L221.9 172.8L221.0 168.3L220.3 163.6L219.8 159.0L219.5 153.6L219.5 147.8L219.8 142.3L220.4 136.8L221.5 130.8L220.7 130.5Z" fill="none" stroke="#a2a9e2" stroke-width="1"/>
</svg>
</div>

<!-- ============ V SCROLLBAR ============ -->
<div class="a" style="left:790px;top:34px;width:10px;height:437px;background:#464646"></div><div class="a" style="left:789.6px;top:34px;width:1.2px;height:437px;background:#383838"></div><div class="a" style="left:797.5px;top:34px;width:1px;height:437px;background:#3e3e3e"></div>
<div class="a" style="left:792px;top:243px;width:5px;height:11.5px;background:#4c4c4c;border-radius:2px"></div>
<svg class="i" style="left:0;top:0" width="800" height="482">
<path class="s" d="M793 466L795 468L797 466" style="stroke:#999;stroke-width:0.7"/>
<path class="s" d="M793 39.5L795 37.5L797 39.5" style="stroke:#aaa;stroke-width:0.7"/>
</svg>

<!-- ============ STATUS BAR ============ -->
<div class="a" style="left:40.5px;top:471px;width:759.5px;height:11px;background:#353535"></div>
<div class="a" style="left:41px;top:471px;width:232px;height:9px;background:#4a4a4a"></div>
<div class="a" style="left:273px;top:471px;width:517px;height:9px;background:#3d3d3d"></div>
<div class="a" style="left:42.8px;top:471.5px;width:35.7px;height:8.5px;background:#3e3e3e"></div>
<div class="t" style="left:44.2px;top:473.3px;font-size:5.9px;color:#e0e0e0">600%</div>
<div class="a" style="left:102px;top:471.5px;width:29px;height:8.5px;background:#3e3e3e"></div>
<div class="t" style="left:104px;top:473.3px;font-size:5.9px;color:#e0e0e0">1</div>
<div class="t" style="left:195px;top:473.6px;font-size:5.1px;color:#d6d6d6">Selection</div>
<div class="a" style="left:517px;top:472.5px;width:15px;height:6px;background:#555;border-radius:2px"></div>
<svg class="i" style="left:0;top:0" width="800" height="482">
<path class="s" d="M71.5 474.8L73.3 476.6L75.1 474.8" style="stroke-width:0.8"/>
<path class="s" d="M124.5 474.8L126.3 476.6L128.1 474.8" style="stroke-width:0.8"/>
<path class="s" d="M84 474V478M87 474L85 476L87 478M94 474L92 476L94 478M137 474L139 476L137 478M146 474L148 476L146 478M149 474V478" style="stroke:#6a6a6a;stroke-width:0.7"/>
<path d="M262 473.8L265 476L262 478.2Z" fill="#ccc"/>
<path class="s" d="M273 474L271 476L273 478" style="stroke:#aaa;stroke-width:0.7"/>
<path class="s" d="M784 474L786 476L784 478" style="stroke:#aaa;stroke-width:0.7"/>
</svg>

<!-- ============ DOCK: TRANSFORM ============ -->
<div class="a" style="left:651px;top:42px;width:132px;height:167.5px;background:#535353;border-radius:0 2.5px 0 0"></div>
<div class="a" style="left:651px;top:42px;width:132px;height:6.8px;background:#3f3f3f;border-radius:0 2.5px 0 0"></div>
<div class="a" style="left:651px;top:48.7px;width:132px;height:14.3px;background:#474747"></div>
<div class="a" style="left:651px;top:48.7px;width:37.7px;height:14.3px;background:#535353"></div>
<div class="t" style="left:658.6px;top:53.4px;font-size:5.1px;font-weight:bold;color:#f0f0f0">Transform</div>
<svg class="i" style="left:0;top:0" width="800" height="482">
<path class="s" d="M768 44L766.5 45.3L768 46.6M770.3 44L768.8 45.3L770.3 46.6" style="stroke:#aaa;stroke-width:0.6"/>
<path class="s" d="M776.5 43.8L779.3 46.6M779.3 43.8L776.5 46.6" style="stroke:#bbb;stroke-width:0.7"/>
<path class="s" d="M774 54H779.5M774 55.6H779.5M774 57.2H779.5" style="stroke:#999;stroke-width:0.8"/>
<!-- ref point vertical -->
<circle cx="662.8" cy="73.5" r="1.3" class="s" style="stroke:#bbb;stroke-width:0.6"/>
<circle cx="662.8" cy="77.5" r="1.3" class="s" style="stroke:#bbb;stroke-width:0.6"/>
<circle cx="662.8" cy="81.5" r="1.3" class="s" style="stroke:#bbb;stroke-width:0.6"/>
</svg>
<div class="t p" style="left:672px;top:69.4px;color:#c8c8c8">X:</div>
<div class="f" style="left:679.5px;top:67.2px;width:28.5px;height:9.3px"></div>
<div class="ft" style="left:681px;top:69.5px">7.3404 in</div>
<div class="t p" style="left:712.4px;top:69.4px;color:#c8c8c8">W:</div>
<div class="f" style="left:720.8px;top:67.2px;width:28.7px;height:9.3px"></div>
<div class="ft" style="left:722.3px;top:69.5px">2.4028 in</div>
<div class="t p" style="left:672px;top:83px;color:#c8c8c8">Y:</div>
<div class="f" style="left:679.5px;top:80.7px;width:28.5px;height:9.3px"></div>
<div class="ft" style="left:681px;top:83px">4.3251 in</div>
<div class="t p" style="left:712.4px;top:83px;color:#c8c8c8">H:</div>
<div class="f" style="left:720.8px;top:80.7px;width:28.7px;height:9.3px"></div>
<div class="ft" style="left:722.3px;top:83px">2.4028 in</div>
<div class="a" style="left:753.7px;top:71.8px;width:11.8px;height:12.2px;background:#2e2e2e;border-radius:1px"></div>
<svg class="i" style="left:0;top:0" width="800" height="482">
<rect x="757.6" y="73.8" width="3.8" height="4.6" rx="1.9" class="s" style="stroke-width:0.8"/>
<rect x="757.6" y="77.4" width="3.8" height="4.6" rx="1.9" class="s" style="stroke-width:0.8"/>
<path class="s" d="M670 102.5L676 97.5M670 102.5H677M672.5 100.5A2.5 2.5 0 0 1 673 102.5" style="stroke-width:0.7"/>
<path d="M712.5 101.5L714.5 97H719.5L717.5 101.5Z" fill="#cfcfcf"/>
</svg>
<div class="t p" style="left:677.5px;top:96.5px;color:#bbb">:</div>
<div class="f" style="left:679.5px;top:94.2px;width:18.5px;height:9.3px"></div>
<div class="f" style="left:698.5px;top:94.2px;width:9.5px;height:9.3px;background:#4c4c4c"></div>
<div class="ft" style="left:681px;top:96.5px">0°</div>
<div class="t p" style="left:719.5px;top:96.5px;color:#bbb">:</div>
<div class="f" style="left:721px;top:94.2px;width:18.5px;height:9.3px"></div>
<div class="f" style="left:740px;top:94.2px;width:9.5px;height:9.3px;background:#4c4c4c"></div>
<div class="ft" style="left:722.5px;top:96.5px">0°</div>
<svg class="i" style="left:0;top:0" width="800" height="482"><path class="s" d="M701.3 97.9L703.1 99.7L704.9 97.9M743.3 97.9L745.1 99.7L746.9 97.9" style="stroke-width:0.9"/></svg>
<div class="t" style="left:693.6px;top:144px;font-size:5px;color:#6e6e6e">No Shape Properties</div>
<div class="t" style="left:663.7px;top:189.7px;font-size:5.1px;color:#e8e8e8">Scale Corners</div>
<div class="t" style="left:663.7px;top:200.2px;font-size:5.1px;color:#e8e8e8">Scale Strokes &amp; Effects</div>

<!-- ============ DOCK: LAYERS ============ -->
<div class="a" style="left:651px;top:209.3px;width:132px;height:1.8px;background:#383838"></div>
<div class="a" style="left:651px;top:211px;width:132px;height:254.6px;background:#535353"></div>
<div class="a" style="left:651px;top:211px;width:132px;height:14.2px;background:#474747"></div>
<div class="a" style="left:651px;top:211px;width:24.6px;height:14.2px;background:#535353"></div>
<div class="t" style="left:655.7px;top:215.8px;font-size:5.1px;font-weight:bold;color:#f0f0f0">Layers</div>
<div class="t" style="left:680.3px;top:215.8px;font-size:5.1px;color:#c4c4c4">Libraries</div>
<svg class="i" style="left:0;top:0" width="800" height="482">
<path class="s" d="M774 216.3H779.5M774 217.9H779.5M774 219.5H779.5" style="stroke:#999;stroke-width:0.8"/>
</svg>
<div class="a" style="left:651px;top:227.8px;width:131.5px;height:11.8px;background:#4e5c70"></div>
<div class="a" style="left:677px;top:228.5px;width:1.4px;height:10.5px;background:#3f6fe0"></div>
<div class="a" style="left:692.1px;top:229.5px;width:10px;height:9.2px;background:#fff;border:0.8px solid #222"></div>
<div class="t" style="left:704.8px;top:232.2px;font-size:5.1px;color:#f0f0f0">Layer 1</div>
<svg class="i" style="left:0;top:0" width="800" height="482">
<path class="s" d="M683.8 231.8L685.6 233.7L683.8 235.6" style="stroke:#ddd;stroke-width:0.8"/>
<circle cx="766.5" cy="233.8" r="1.7" class="s" style="stroke:#ddd;stroke-width:0.7"/>
<circle cx="773.9" cy="233.8" r="2.2" fill="#2d5fe0" stroke="#ddd" stroke-width="0.6"/>
<path d="M777.3 228.3L780.5 228.3L780.5 231.5Z" fill="#ddd"/>
</svg>
<div class="a" style="left:651px;top:452.5px;width:132px;height:9.5px;background:#4d4d4d"></div>
<div class="a" style="left:651px;top:461px;width:132px;height:4.6px;background:#4a4a4a;border-top:1.2px solid #393939;border-bottom:0.6px solid #3a3a3a"></div>
<div class="t" style="left:654.4px;top:455.3px;font-size:5px;color:#d6d6d6">1 Layer</div>
<svg class="i" style="left:0;top:0" width="800" height="482">
<path class="s" d="M697.5 454.2H694.6V460.2H700.6V457.3M697.5 457.3L700.6 454.2M698.3 454.2H700.6V456.5" style="stroke-width:0.7"/>
<circle cx="712.2" cy="456.4" r="2" class="s" style="stroke-width:0.8"/>
<path class="s" d="M710.8 457.8L708.7 460" style="stroke-width:1"/>
<rect x="721.5" y="454.3" width="5.5" height="5.5" class="s" style="stroke-width:0.7"/>
<path d="M723 458.3L725.5 455.8V458.3Z" fill="#cfcfcf"/>
<path class="s" d="M734.5 455.3H736.5L737.5 456.5" style="stroke-width:0.7"/>
<rect x="737.3" y="455" width="3.8" height="4.8" fill="#cfcfcf"/>
<rect x="749.3" y="454.5" width="5.5" height="5.5" class="s" style="stroke-width:0.7"/>
<path d="M751 455.5H754V459H751Z" fill="#cfcfcf"/>
<path d="M763.5 455H768V460.2H763.5Z M763 454.6H768.5" fill="#676767" stroke="#676767" stroke-width="0.5"/>
</svg>

<!-- ============ PROPERTIES PANEL ============ -->
<div class="a" style="left:529.2px;top:41.4px;width:132.4px;height:262.3px;background:#535353;border-radius:2.5px 2.5px 0 0"></div>
<div class="a" style="left:529.2px;top:41.4px;width:132.4px;height:7px;background:#3f3f3f;border-radius:2.5px 2.5px 0 0"></div>
<div class="a" style="left:529.3px;top:48.5px;width:132.3px;height:14px;background:#474747"></div>
<div class="a" style="left:529.3px;top:48.5px;width:34.3px;height:14px;background:#535353"></div>
<div class="a" style="left:529.2px;top:48.5px;width:1.2px;height:250px;background:#444444"></div>
<div class="a" style="left:660.9px;top:62.5px;width:0.7px;height:236px;background:#4a4a4a"></div>
<div class="a" style="left:529.2px;top:298.4px;width:132.4px;height:5.3px;background:#4e4e4e;border-top:1.8px solid #3b3b3b"></div>
<div class="t" style="left:535px;top:53.2px;font-size:5px;font-weight:bold;color:#f2f2f2">Properties</div>
<div class="t" style="left:569px;top:53.2px;font-size:5.55px;color:#b9b9b9">Pathfinder</div>
<div class="t" style="left:604.7px;top:53.2px;font-size:5.55px;color:#b9b9b9">Align</div>
<svg class="i" style="left:0;top:0" width="800" height="482">
<path class="s" d="M646 44L644.5 45.3L646 46.6M648.3 44L646.8 45.3L648.3 46.6" style="stroke:#aaa;stroke-width:0.6"/>
<path class="s" d="M655.6 43.8L658.4 46.6M658.4 43.8L655.6 46.6" style="stroke:#bbb;stroke-width:0.7"/>
</svg>
<div class="t p" style="left:535px;top:69.8px">Compound Path</div>
<div class="t p" style="left:535.5px;top:86.6px">Transform</div>
<svg class="i" style="left:0;top:0" width="800" height="482">
<g class="s" style="stroke:#c8c8c8;stroke-width:0.55">
<circle cx="537" cy="105" r="1.2"/><circle cx="540.5" cy="105" r="1.2"/><circle cx="544" cy="105" r="1.2"/>
<circle cx="537" cy="108.5" r="1.2"/><circle cx="544" cy="108.5" r="1.2"/>
<circle cx="537" cy="112" r="1.2"/><circle cx="540.5" cy="112" r="1.2"/><circle cx="544" cy="112" r="1.2"/>
</g>
<circle cx="540.5" cy="108.5" r="1.4" fill="#f0f0f0"/>
</svg>
<div class="t p" style="left:552.8px;top:99.3px;color:#c8c8c8">X:</div>
<div class="f" style="left:559.6px;top:97px;width:29.8px;height:9.4px"></div>
<div class="ft" style="left:561.3px;top:99.4px">7.34 in</div>
<div class="t p" style="left:597px;top:99.3px;color:#c8c8c8">W:</div>
<div class="f" style="left:605.5px;top:97px;width:28.1px;height:9.4px"></div>
<div class="ft" style="left:607.2px;top:99.4px">2.403 in</div>
<div class="t p" style="left:553px;top:113.6px;color:#c8c8c8">Y:</div>
<div class="f" style="left:559.6px;top:111.3px;width:29.8px;height:9.2px"></div>
<div class="ft" style="left:561.3px;top:113.6px">4.325 in</div>
<div class="t p" style="left:598px;top:113.6px;color:#c8c8c8">H:</div>
<div class="f" style="left:605.5px;top:111.3px;width:28.1px;height:9.2px"></div>
<div class="ft" style="left:607.2px;top:113.6px">2.403 in</div>
<svg class="i" style="left:0;top:0" width="800" height="482">
<ellipse cx="644.6" cy="106.9" rx="1.9" ry="2.1" class="s" style="stroke-width:0.85"/><ellipse cx="644.6" cy="110.9" rx="1.9" ry="2.1" class="s" style="stroke-width:0.85"/><path d="M641.2 105L648.3 113" stroke="#535353" stroke-width="1.6"/><path d="M641.2 105L648.3 113" stroke="#d0d0d0" stroke-width="0.8"/>
<path class="s" d="M549.5 132.5L555.5 127M549.5 132.5H556.5M552 130.5A2.3 2.3 0 0 1 552.6 132.5" style="stroke-width:0.7"/>
<path d="M607 126L610 129.3L607 132.5Z M614.2 126L611.2 129.3L614.2 132.5Z" fill="none" stroke="#cfcfcf" stroke-width="0.7"/>
<path d="M610.6 125.5V133" stroke="#cfcfcf" stroke-width="0.5"/>
<path d="M623.5 125.5H630L626.75 128.8Z M623.5 133.5H630L626.75 130.2Z" fill="#cfcfcf"/>
<path d="M623.5 129.5H630" stroke="#cfcfcf" stroke-width="0.5"/>
<circle cx="647.2" cy="141.2" r="0.8" fill="#ddd"/><circle cx="650" cy="141.2" r="0.8" fill="#ddd"/><circle cx="652.8" cy="141.2" r="0.8" fill="#ddd"/>
</svg>
<div class="t p" style="left:557.5px;top:127px;color:#bbb">:</div>
<div class="f" style="left:560px;top:124.5px;width:19.5px;height:9.1px"></div>
<div class="f" style="left:579.8px;top:124.5px;width:9.6px;height:9.1px;background:#4c4c4c"></div>
<div class="ft" style="left:561.5px;top:126.8px">0°</div>

<div class="t p" style="left:535px;top:155.5px">Appearance</div>
<svg class="i" style="left:0;top:0" width="800" height="482">
<rect x="535.5" y="166" width="9.4" height="9.2" fill="#fff" stroke="#333" stroke-width="0.5"/>
<path d="M536 174.8L544.5 166.4" stroke="#e0302e" stroke-width="1.2"/>
<rect x="535.5" y="181.4" width="9.4" height="9.3" fill="#fff" stroke="#333" stroke-width="0.5"/>
<rect x="538" y="183.9" width="4.4" height="4.4" fill="#5a2e35"/>
<path d="M536 190.3L544.5 181.8" stroke="#e0302e" stroke-width="1.2"/>
<g class="s" style="stroke:#c8c8c8;stroke-width:0.5">
<rect x="535.6" y="196.4" width="9.2" height="9.2"/>
<circle cx="538" cy="198.8" r="0.9"/><circle cx="542.4" cy="198.8" r="0.9"/><circle cx="540.2" cy="201" r="0.9"/><circle cx="538" cy="203.2" r="0.9"/><circle cx="542.4" cy="203.2" r="0.9"/>
</g>
</svg>
<div class="t p" style="left:551px;top:168.8px;color:#bfbfbf">Fill</div>
<div class="t p" style="left:551px;top:183.8px;color:#e8e8e8;text-decoration:underline">Stroke</div>
<div class="f" style="left:573.8px;top:181px;width:7.9px;height:10px"></div>
<div class="f" style="left:583px;top:181px;width:17px;height:10px"></div>
<div class="f" style="left:600px;top:181px;width:9px;height:10px;background:#4c4c4c"></div>
<svg class="i" style="left:0;top:0" width="800" height="482">
<circle cx="647.2" cy="228.6" r="0.8" fill="#ddd"/><circle cx="650" cy="228.6" r="0.8" fill="#ddd"/><circle cx="652.8" cy="228.6" r="0.8" fill="#ddd"/>
</svg>
<div class="t p" style="left:551px;top:198.8px;color:#e8e8e8;text-decoration:underline">Opacity</div>
<div class="f" style="left:573px;top:196.3px;width:26px;height:9.4px"></div>
<div class="f" style="left:599.3px;top:196.3px;width:9.7px;height:9.4px;background:#4c4c4c"></div>
<div class="ft" style="left:574.8px;top:198.7px">100%</div>
<div class="t" style="left:537.8px;top:212.3px;font-size:7px;font-style:italic;font-family:'Liberation Serif',serif;color:#cfcfcf">fx<span style="font-size:4px">.</span></div>

<svg class="i" style="left:0;top:0" width="800" height="482"><path class="s" d="M581.7 127.8L583.5 129.6L585.3 127.8" style="stroke-width:0.9"/><path class="s" d="M576.2 184.3L577.7 182.8L579.2 184.3M576.2 187.7L577.7 189.2L579.2 187.7" style="stroke-width:0.8"/><path class="s" d="M602.8 185.2L604.6 187L606.4 185.2" style="stroke-width:0.9"/><path class="s" d="M603.6 199.2L605.4 201L603.6 202.8" style="stroke-width:0.9"/></svg>
<div class="t p" style="left:534.6px;top:245px">Quick Actions</div>
<div class="a" style="left:535.2px;top:254.3px;width:52.5px;height:11.3px;border:0.8px solid #6e6e6e;border-radius:1.5px"></div>
<div class="t" style="left:552.1px;top:258.2px;font-size:5.1px;color:#f0f0f0">Release</div>
<div class="a" style="left:592.9px;top:254.3px;width:52.9px;height:11.3px;border:0.8px solid #6e6e6e;border-radius:1.5px"></div>
<div class="t" style="left:609.9px;top:258.2px;font-size:5.1px;color:#f0f0f0">Arrange</div>


<!-- ============ ARROW ============ -->
<svg class="a" style="left:0;top:0" width="800" height="482">
<line x1="437" y1="251" x2="506" y2="195.5" stroke="#f03d3d" stroke-width="9.6" stroke-linecap="round"/>
<path d="M527.3 177 L495.6 184.4 L513.6 207.3 Z" fill="#f03d3d" stroke="#f03d3d" stroke-width="1" stroke-linejoin="round"/>
</svg>
<!-- cursor -->
<svg class="a" style="left:0;top:0" width="800" height="482">
<path d="M621.6 42.2V51.2L623.8 49.2L625.3 52.3L626.7 51.7L625.3 48.7H628Z" fill="#fff" stroke="#111" stroke-width="0.7" stroke-linejoin="round"/>
</svg>
</body></html>
